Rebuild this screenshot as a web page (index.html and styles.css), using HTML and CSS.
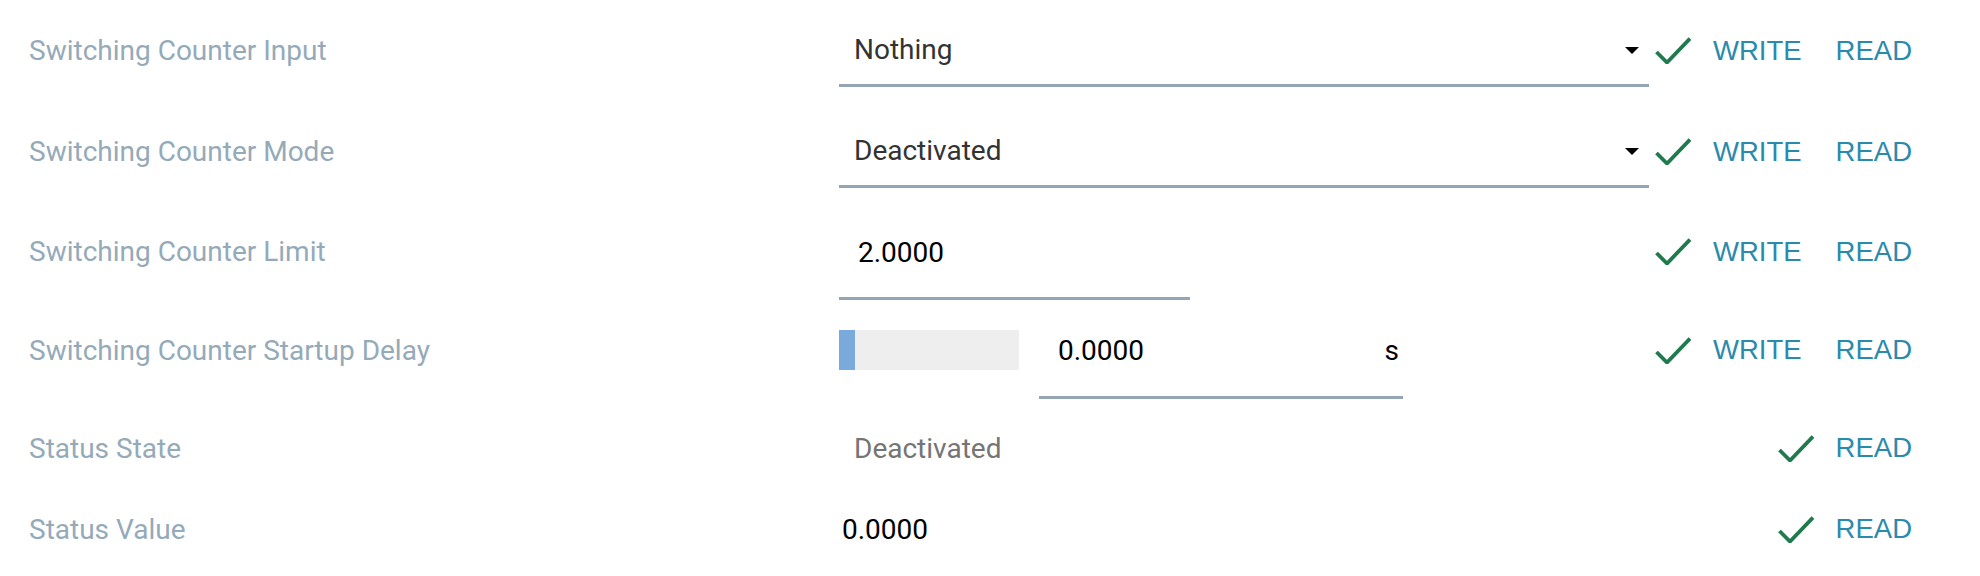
FILE: index.html
```html
<!DOCTYPE html>
<html lang="en">
<head>
    <meta charset="UTF-8">
    <meta name="viewport" content="width=device-width, initial-scale=1.0">
    <title>Switching Counter</title>
    <link rel="stylesheet" href="styles.css">
</head>
<body>
    <div class="params">
        <!-- Input source -->
        <div class="row row-select">
            <div class="label">Switching Counter Input</div>
            <div class="control">
                <div class="select">
                    <span class="select-text">Nothing</span>
                    <span class="caret"></span>
                </div>
            </div>
            <div class="actions">
                <svg class="check" width="36" height="27" viewBox="0 0 36 27"><path d="M1.5 15 L12 25.5 L35 1.5" fill="none" stroke="#1f7a4d" stroke-width="3.8"/></svg>
                <button class="btn">WRITE</button>
                <button class="btn">READ</button>
            </div>
        </div>

        <!-- Mode -->
        <div class="row row-select">
            <div class="label">Switching Counter Mode</div>
            <div class="control">
                <div class="select">
                    <span class="select-text">Deactivated</span>
                    <span class="caret"></span>
                </div>
            </div>
            <div class="actions">
                <svg class="check" width="36" height="27" viewBox="0 0 36 27"><path d="M1.5 15 L12 25.5 L35 1.5" fill="none" stroke="#1f7a4d" stroke-width="3.8"/></svg>
                <button class="btn">WRITE</button>
                <button class="btn">READ</button>
            </div>
        </div>

        <!-- Limit -->
        <div class="row row-limit">
            <div class="label">Switching Counter Limit</div>
            <div class="control">
                <div class="num num-limit">
                    <span>2.0000</span>
                </div>
            </div>
            <div class="actions">
                <svg class="check" width="36" height="27" viewBox="0 0 36 27"><path d="M1.5 15 L12 25.5 L35 1.5" fill="none" stroke="#1f7a4d" stroke-width="3.8"/></svg>
                <button class="btn">WRITE</button>
                <button class="btn">READ</button>
            </div>
        </div>

        <!-- Startup delay -->
        <div class="row row-delay">
            <div class="label">Switching Counter Startup Delay</div>
            <div class="control">
                <div class="slider">
                    <div class="slider-fill"></div>
                </div>
                <div class="num num-delay">
                    <span>0.0000</span>
                    <span class="unit">s</span>
                </div>
            </div>
            <div class="actions">
                <svg class="check" width="36" height="27" viewBox="0 0 36 27"><path d="M1.5 15 L12 25.5 L35 1.5" fill="none" stroke="#1f7a4d" stroke-width="3.8"/></svg>
                <button class="btn">WRITE</button>
                <button class="btn">READ</button>
            </div>
        </div>

        <!-- Status -->
        <div class="row row-state">
            <div class="label">Status State</div>
            <div class="control">
                <span class="readonly">Deactivated</span>
            </div>
            <div class="actions">
                <svg class="check" width="36" height="27" viewBox="0 0 36 27"><path d="M1.5 15 L12 25.5 L35 1.5" fill="none" stroke="#1f7a4d" stroke-width="3.8"/></svg>
                <button class="btn">READ</button>
            </div>
        </div>

        <div class="row row-value">
            <div class="label">Status Value</div>
            <div class="control">
                <span class="value">0.0000</span>
            </div>
            <div class="actions">
                <svg class="check" width="36" height="27" viewBox="0 0 36 27"><path d="M1.5 15 L12 25.5 L35 1.5" fill="none" stroke="#1f7a4d" stroke-width="3.8"/></svg>
                <button class="btn">READ</button>
            </div>
        </div>
    </div>
</body>
</html>
```

FILE: styles.css
```css
* {
    margin: 0;
    padding: 0;
    box-sizing: border-box;
}

body {
    font-family: Roboto, "Liberation Sans", sans-serif;
    background: #fff;
}

.params {
    padding: 0 56px 0 29px;
}

.row {
    display: flex;
    align-items: center;
}

.row-select {
    height: 101px;
}

.row-limit {
    height: 99px;
}

.row-delay {
    height: 98px;
}

.row-state {
    height: 98px;
}

.row-value {
    height: 64px;
}

.label {
    width: 810px;
    flex: none;
    font-size: 28px;
    color: #95aab9;
}

.control {
    flex: 1;
    display: flex;
    align-items: center;
    font-size: 28px;
}

/* dropdowns */
.select {
    width: 810px;
    height: 72px;
    display: flex;
    align-items: center;
    padding: 0 10px 0 15px;
    border-bottom: 3px solid #94a6b3;
    color: #333;
}

.select-text {
    flex: 1;
}

.caret {
    width: 0;
    height: 0;
    margin-top: 3px;
    border-left: 7px solid transparent;
    border-right: 7px solid transparent;
    border-top: 7px solid #000;
}

/* number fields */
.num {
    display: flex;
    align-items: center;
    justify-content: space-between;
    padding: 4px 4px 0 19px;
    border-bottom: 3px solid #94a6b3;
    color: #000;
}

.num-limit {
    width: 351px;
    height: 97px;
}

.num-delay {
    width: 364px;
    height: 98px;
}

.unit {
    color: #000;
}

.slider {
    width: 180px;
    height: 40px;
    margin-right: 20px;
    background: #eeeeee;
    display: flex;
}

.slider-fill {
    width: 16px;
    background: #7aaadc;
}

.readonly {
    padding-left: 15px;
    color: #757575;
}

.value {
    padding-left: 3px;
    color: #000;
}

/* write / read actions */
.actions {
    flex: none;
    display: flex;
    align-items: center;
    gap: 10px;
}

.check {
    display: block;
}

.btn {
    background: none;
    border: none;
    padding: 0 12px;
    font-family: "Liberation Sans", Arial, sans-serif;
    font-size: 27.5px;
    color: #2a8aab;
    cursor: pointer;
}
```
